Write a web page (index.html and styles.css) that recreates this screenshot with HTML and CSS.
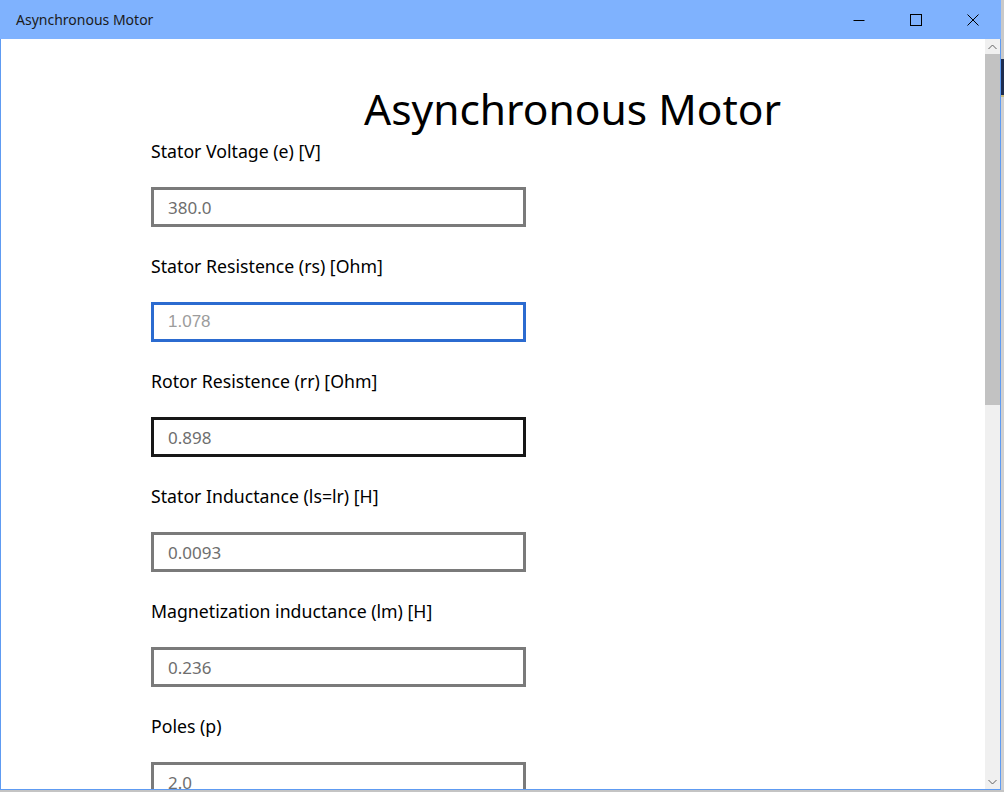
FILE: index.html
```html
<!DOCTYPE html>
<html lang="en">
<head>
<meta charset="utf-8">
<title>Asynchronous Motor</title>
<link rel="stylesheet" href="styles.css">
</head>
<body>
<div class="screen">
  <div class="top-row">
    <div class="window">
      <header class="titlebar">
        <span class="app-title">Asynchronous Motor</span>
        <div class="caption-buttons">
          <button class="cap-btn" aria-label="Minimize">
            <svg width="12" height="12" viewBox="0 0 12 12"><path d="M0.5 6.5H11.5" stroke="#000" stroke-width="1"/></svg>
          </button>
          <button class="cap-btn" aria-label="Maximize">
            <svg width="12" height="12" viewBox="0 0 12 12"><rect x="0.5" y="0.5" width="11" height="11" fill="none" stroke="#000" stroke-width="1"/></svg>
          </button>
          <button class="cap-btn" aria-label="Close">
            <svg width="12" height="12" viewBox="0 0 12 12"><path d="M0.5 0.5L11.5 11.5M11.5 0.5L0.5 11.5" stroke="#000" stroke-width="1"/></svg>
          </button>
        </div>
      </header>
      <div class="client">
        <main class="content">
          <h1 class="page-title">Asynchronous Motor</h1>
          <div class="field">
            <label class="field-label">Stator Voltage (e) [V]</label>
            <input class="field-input" type="text" value="380.0" readonly>
          </div>
          <div class="field">
            <label class="field-label">Stator Resistence (rs) [Ohm]</label>
            <input class="field-input is-focused" type="text" value="1.078" readonly>
          </div>
          <div class="field">
            <label class="field-label">Rotor Resistence (rr) [Ohm]</label>
            <input class="field-input is-hover" type="text" value="0.898" readonly>
          </div>
          <div class="field">
            <label class="field-label">Stator Inductance (ls=lr) [H]</label>
            <input class="field-input" type="text" value="0.0093" readonly>
          </div>
          <div class="field">
            <label class="field-label">Magnetization inductance (lm) [H]</label>
            <input class="field-input" type="text" value="0.236" readonly>
          </div>
          <div class="field">
            <label class="field-label">Poles (p)</label>
            <input class="field-input" type="text" value="2.0" readonly>
          </div>
        </main>
        <div class="scrollbar">
          <div class="sb-arrow">
            <svg width="9" height="6" viewBox="0 0 9 6"><path d="M0.5 5L4.5 1L8.5 5" fill="none" stroke="#606060" stroke-width="1"/></svg>
          </div>
          <div class="sb-thumb"></div>
          <div class="sb-track"></div>
          <div class="sb-arrow">
            <svg width="9" height="6" viewBox="0 0 9 6"><path d="M0.5 1L4.5 5L8.5 1" fill="none" stroke="#606060" stroke-width="1"/></svg>
          </div>
        </div>
      </div>
    </div>
    <div class="outside-strip"></div>
  </div>
  <div class="outside-bottom"></div>
</div>
</body>
</html>
```
FILE: styles.css
```css
html, body {
  margin: 0;
  padding: 0;
}

body {
  width: 1004px;
  height: 792px;
  overflow: hidden;
  font-family: "Noto Sans", "Open Sans", sans-serif;
}

.screen {
  width: 1004px;
  height: 792px;
  display: flex;
  flex-direction: column;
  background: #c9c9c9;
}

.top-row {
  display: flex;
  height: 790px;
}

.window {
  width: 1001px;
  height: 790px;
  box-sizing: border-box;
  border-left: 1px solid #5e9bf2;
  border-right: 1px solid #5e9bf2;
  border-bottom: 1px solid #5e9bf2;
  display: flex;
  flex-direction: column;
  background: #ffffff;
}

.titlebar {
  height: 39px;
  flex: none;
  background: #7fb2fe;
  display: flex;
  align-items: center;
  justify-content: space-between;
  margin-left: -1px;
  margin-right: -1px;
}

.app-title {
  padding-left: 16px;
  font-size: 14px;
  color: #1b1b1b;
  padding-bottom: 1px;
}

.caption-buttons {
  display: flex;
  height: 100%;
}

.cap-btn {
  width: 57px;
  height: 39px;
  border: 0;
  padding: 0;
  background: transparent;
  display: flex;
  align-items: center;
  justify-content: center;
}

.client {
  flex: 1;
  display: flex;
  min-height: 0;
}

.content {
  flex: 1;
  overflow: hidden;
  padding-top: 43px;
  padding-left: 150px;
}

.page-title {
  margin: 0 0 3px 213px;
  font-weight: 400;
  font-size: 42.5px;
  line-height: 54px;
  color: #000;
}

.field {
  display: flex;
  flex-direction: column;
  align-items: flex-start;
  margin-bottom: 27px;
}

.field-label {
  font-size: 17.7px;
  line-height: 24px;
  color: #000;
  margin-bottom: 24px;
}

.field-input {
  width: 375px;
  height: 40px;
  box-sizing: border-box;
  border: 3px solid #7a7a7a;
  padding: 0 0 0 14px;
  margin: 0;
  font-family: "Noto Sans", "Open Sans", sans-serif;
  font-size: 17px;
  color: #6e6e6e;
  background: #fff;
  outline: none;
}

.field-input.is-focused {
  border-color: #2b6bd0;
  color: #9c9c9c;
  font-family: "Liberation Sans", Arial, sans-serif;
}

.field-input.is-hover {
  border-color: #171717;
}

.scrollbar {
  width: 15px;
  flex: none;
  display: flex;
  flex-direction: column;
  background: #f0f0f0;
}

.sb-arrow {
  height: 15px;
  flex: none;
  display: flex;
  align-items: center;
  justify-content: center;
}

.sb-thumb {
  height: 351px;
  flex: none;
  background: #c2c2c2;
}

.sb-track {
  flex: 1;
}

.outside-strip {
  width: 3px;
  height: 790px;
  background:
    linear-gradient(to bottom,
      #c9c9c9 0px, #c9c9c9 59px,
      #1e2d4f 59px, #1e2d4f 95px,
      #c8b97a 95px, #c8b97a 97px,
      #d0d0d0 97px, #d0d0d0 100%);
}

.outside-bottom {
  height: 2px;
  background: #c4c4c4;
}
```
